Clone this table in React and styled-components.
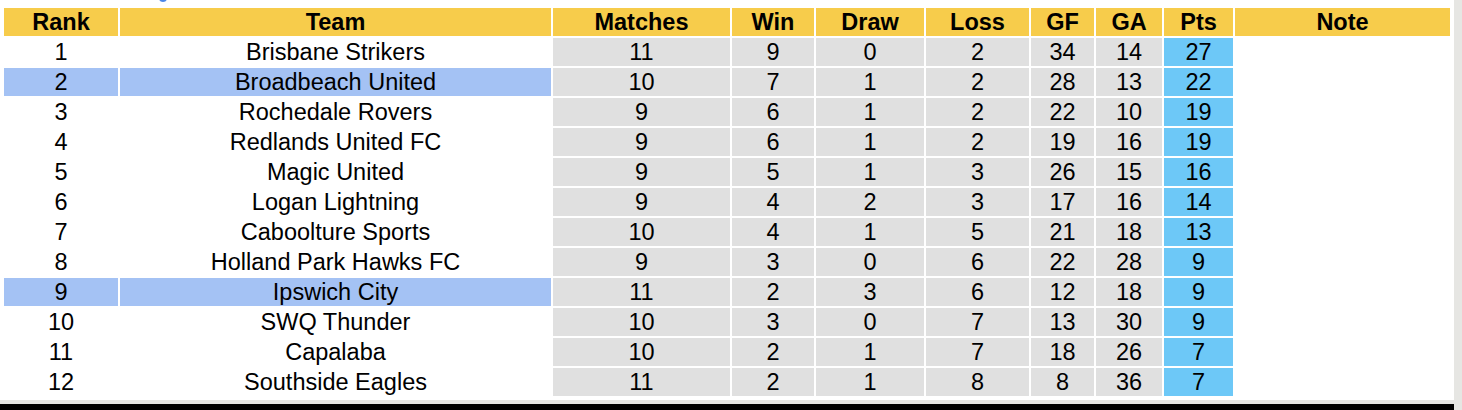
import React from 'react';
import styled, { createGlobalStyle } from 'styled-components';

const GlobalStyle = createGlobalStyle`
   html, body {
      margin: 0;
      padding: 0;
      background: #ffffff;
   }
   body {
      font-family: "Liberation Sans", Arial, sans-serif;
      color: #000;
   }
`;

const Page = styled.div`
   display: flex;
   width: 1462px;
   height: 410px;
   overflow: hidden;
`;

const Sheet = styled.div`
   display: flex;
   flex-direction: column;
   width: 1454px;
   background: #ffffff;
`;

const Gutter = styled.div`
   width: 8px;
   background: #e6e6e3;
`;

const TopStrip = styled.div`
   height: 6px;
   padding-left: 159px;
`;

const Dot = styled.div`
   width: 8px;
   height: 8px;
   margin-top: -6px;
   border-radius: 50%;
   background: #4a86e8;
`;

const TableArea = styled.div`
   flex: 1;
   padding: 0 2px 2px 2px;
`;

const BottomEdge = styled.div`
   height: 4px;
   background: #e6e6e3;
`;

const BlackBar = styled.div`
   height: 6px;
   background: #000;
`;

const Table = styled.table`
   width: 1450px;
   table-layout: fixed;
   border-collapse: separate;
   border-spacing: 2px;
   margin: 0;
   font-size: 23.5px;
`;

const HeadCell = styled.th`
   height: 28px;
   padding: 0;
   background: #f7cc4b;
   font-weight: 700;
   text-align: center;
   line-height: 28px;
   white-space: nowrap;
`;

const cellColors = {
   plain: '#ffffff',
   chosen: '#a4c2f4',
   stat: '#e0e0e0',
   points: '#6dc8f7',
};

const Cell = styled.td`
   height: 28px;
   padding: 0;
   background: ${p => cellColors[p.$tone || 'plain']};
   text-align: center;
   line-height: 28px;
   white-space: nowrap;
   overflow: hidden;
`;

const columns = [
   { key: 'rank', label: 'Rank', width: 114 },
   { key: 'team', label: 'Team', width: 431 },
   { key: 'matches', label: 'Matches', width: 177 },
   { key: 'win', label: 'Win', width: 82 },
   { key: 'draw', label: 'Draw', width: 108 },
   { key: 'loss', label: 'Loss', width: 103 },
   { key: 'gf', label: 'GF', width: 63 },
   { key: 'ga', label: 'GA', width: 66 },
   { key: 'pts', label: 'Pts', width: 69 },
   { key: 'note', label: 'Note', width: 215 },
];

const teams = [
   [1, 'Brisbane Strikers', 11, 9, 0, 2, 34, 14, 27],
   [2, 'Broadbeach United', 10, 7, 1, 2, 28, 13, 22, true],
   [3, 'Rochedale Rovers', 9, 6, 1, 2, 22, 10, 19],
   [4, 'Redlands United FC', 9, 6, 1, 2, 19, 16, 19],
   [5, 'Magic United', 9, 5, 1, 3, 26, 15, 16],
   [6, 'Logan Lightning', 9, 4, 2, 3, 17, 16, 14],
   [7, 'Caboolture Sports', 10, 4, 1, 5, 21, 18, 13],
   [8, 'Holland Park Hawks FC', 9, 3, 0, 6, 22, 28, 9],
   [9, 'Ipswich City', 11, 2, 3, 6, 12, 18, 9, true],
   [10, 'SWQ Thunder', 10, 3, 0, 7, 13, 30, 9],
   [11, 'Capalaba', 10, 2, 1, 7, 18, 26, 7],
   [12, 'Southside Eagles', 11, 2, 1, 8, 8, 36, 7],
];

const App = () => {
   return (
      <>
         <GlobalStyle />
         <Page>
            <Sheet>
               <TopStrip>
                  <Dot />
               </TopStrip>
               <TableArea>
                  <Table>
                     <colgroup>
                        {columns.map(c => (
                           <col key={c.key} style={{ width: c.width }} />
                        ))}
                     </colgroup>
                     <thead>
                        <tr>
                           {columns.map(c => (
                              <HeadCell key={c.key}>{c.label}</HeadCell>
                           ))}
                        </tr>
                     </thead>
                     <tbody>
                        {teams.map(([rank, team, m, w, d, l, gf, ga, pts, chosen]) => (
                           <tr key={rank}>
                              <Cell $tone={chosen ? 'chosen' : 'plain'}>{rank}</Cell>
                              <Cell $tone={chosen ? 'chosen' : 'plain'}>{team}</Cell>
                              <Cell $tone="stat">{m}</Cell>
                              <Cell $tone="stat">{w}</Cell>
                              <Cell $tone="stat">{d}</Cell>
                              <Cell $tone="stat">{l}</Cell>
                              <Cell $tone="stat">{gf}</Cell>
                              <Cell $tone="stat">{ga}</Cell>
                              <Cell $tone="points">{pts}</Cell>
                              <Cell />
                           </tr>
                        ))}
                     </tbody>
                  </Table>
               </TableArea>
               <BottomEdge />
               <BlackBar />
            </Sheet>
            <Gutter />
         </Page>
      </>
   );
};

export default App;
